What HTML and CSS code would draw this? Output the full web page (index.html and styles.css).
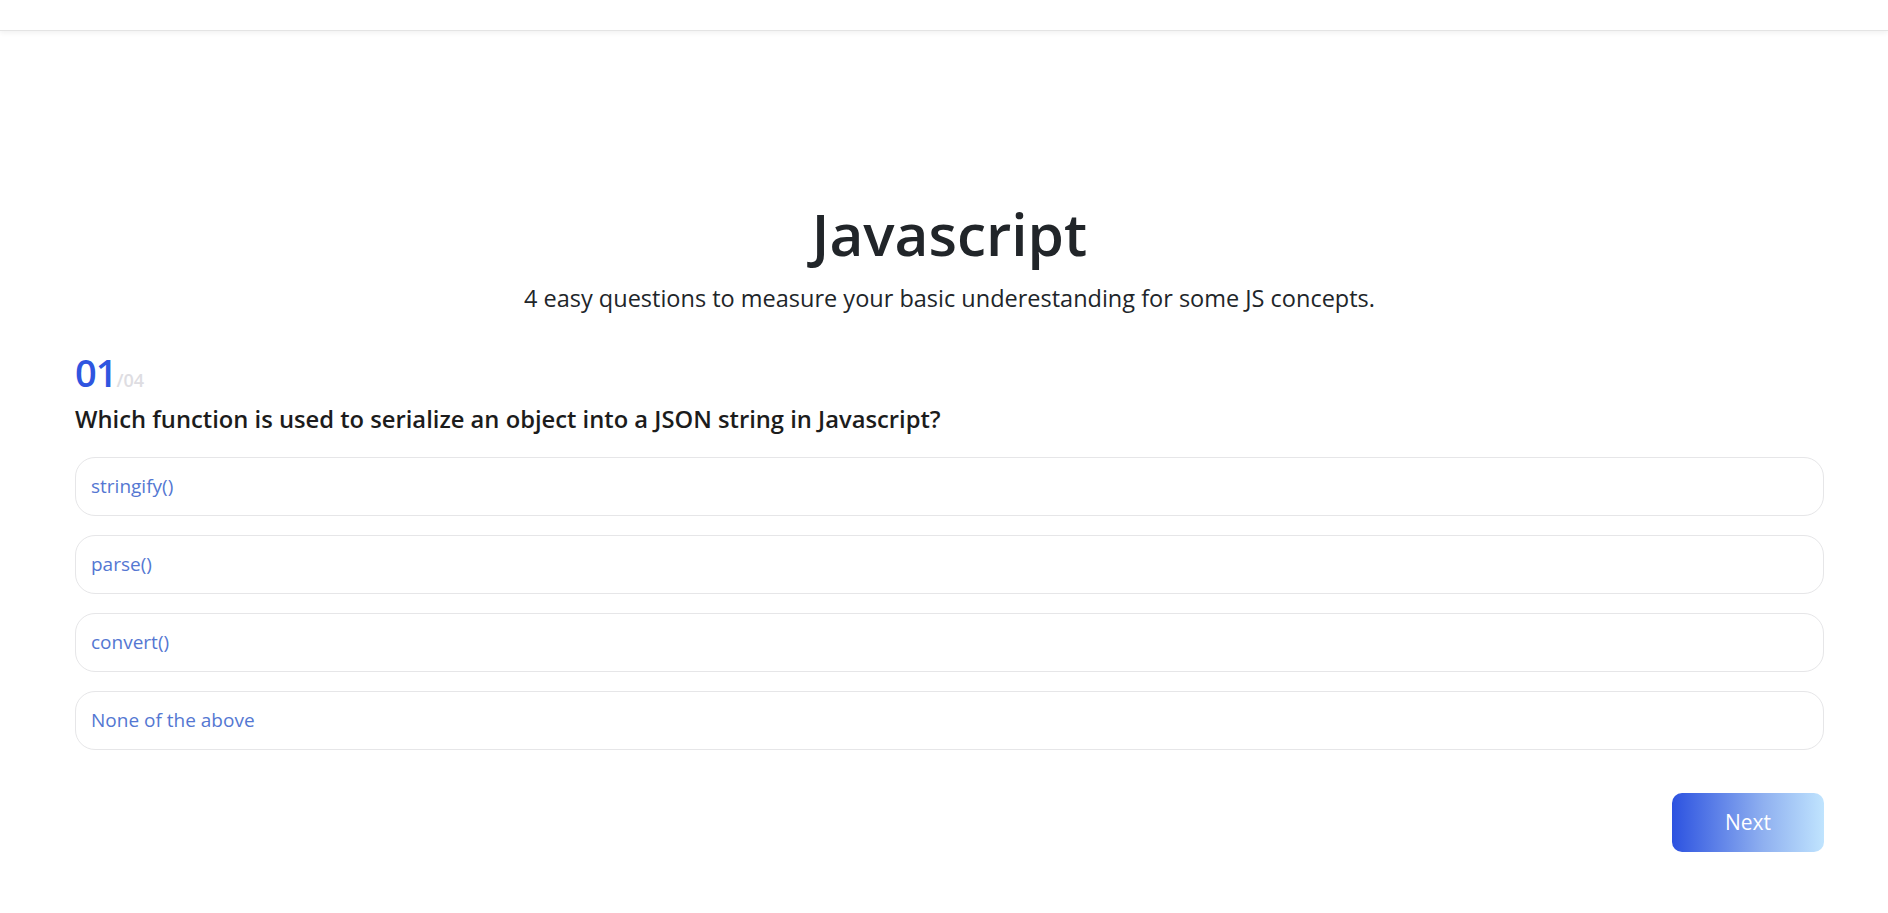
FILE: index.html
```html
<!DOCTYPE html>
<html lang="en">
<head>
<meta charset="utf-8">
<title>Javascript Quiz</title>
<link rel="stylesheet" href="styles.css">
</head>
<body>
<header class="topbar"></header>
<main class="quiz">
  <section class="intro">
    <h1 class="intro-title">Javascript</h1>
    <p class="intro-lead">4 easy questions to measure your basic underestanding for some JS concepts.</p>
  </section>
  <section class="question">
    <div class="counter"><span class="counter-current">01</span><span class="counter-total">/04</span></div>
    <h2 class="question-text">Which function is used to serialize an object into a JSON string in Javascript?</h2>
    <ul class="options">
      <li class="option">stringify()</li>
      <li class="option">parse()</li>
      <li class="option">convert()</li>
      <li class="option">None of the above</li>
    </ul>
    <div class="actions">
      <button class="btn-next" type="button">Next</button>
    </div>
  </section>
</main>
</body>
</html>
```
FILE: styles.css
```css
* { box-sizing: border-box; }
html, body { margin: 0; padding: 0; }
body {
  font-family: "Open Sans", "Noto Sans", sans-serif;
  background: #fff;
  color: #212529;
}
.topbar {
  height: 31px;
  background: #fff;
  border-bottom: 1px solid #e4e4e4;
  box-shadow: 0 2px 5px rgba(0,0,0,0.06);
}
.quiz {
  padding: 0 64px 0 75px;
}
.intro {
  text-align: center;
  padding-top: 167px;
}
.intro-title {
  margin: 0;
  font-size: 58.5px;
  font-weight: 600;
  line-height: 1.2;
  color: #212529;
}
.intro-lead {
  margin: 13px 0 0;
  font-size: 23.5px;
  line-height: 1.5;
  color: #212529;
}
.question {
  margin-top: 37px;
}
.counter {
  line-height: 1;
}
.counter-current {
  font-size: 38px;
  font-weight: 600;
  color: #2f55e0;
  letter-spacing: -1px;
}
.counter-total {
  font-size: 18px;
  font-weight: 600;
  color: #dedde2;
}
.question-text {
  margin: 12px 0 0;
  font-size: 23.75px;
  font-weight: 600;
  line-height: 1.4;
  color: #1c1c1c;
}
.options {
  list-style: none;
  margin: 20px 0 0;
  padding: 0;
  display: flex;
  flex-direction: column;
  gap: 19px;
}
.option {
  height: 59px;
  display: flex;
  align-items: center;
  padding: 0 15px;
  border: 1px solid #e6e6e8;
  border-radius: 20px;
  font-size: 19px;
  color: #5477d2;
  background: #fff;
}
.actions {
  display: flex;
  justify-content: flex-end;
  margin-top: 43px;
}
.btn-next {
  width: 152px;
  height: 59px;
  border: 0;
  border-radius: 10px;
  background: linear-gradient(90deg, #2c52e0 0%, #8fb0f0 60%, #c0e4fe 100%);
  color: #fff;
  font-family: inherit;
  font-size: 21px;
  cursor: pointer;
}
```
